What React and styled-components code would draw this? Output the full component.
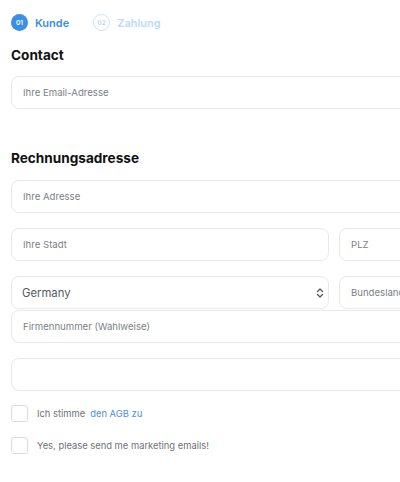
import React from 'react';
import styled, { createGlobalStyle } from 'styled-components';

const GlobalStyle = createGlobalStyle`
  html, body {
    margin: 0;
    padding: 0;
    background: #ffffff;
    overflow: hidden;
  }
  body {
    font-family: Inter, "Noto Sans", sans-serif;
    color: #111;
  }
`;

const Page = styled.div`
  width: 620px;
  padding: 14px 0 0 11px;
  box-sizing: border-box;
`;

const Steps = styled.div`
  display: flex;
  align-items: center;
  gap: 24px;
  height: 17px;
`;

const Step = styled.div`
  display: flex;
  align-items: center;
  gap: 7px;
  color: ${p => (p.$active ? '#3b8fe6' : '#bcdaf8')};
  font-size: 11px;
  font-weight: 600;
`;

const StepNum = styled.span`
  width: 17px;
  height: 17px;
  border-radius: 50%;
  box-sizing: border-box;
  display: flex;
  align-items: center;
  justify-content: center;
  font-size: 6.5px;
  font-weight: 600;
  background: ${p => (p.$active ? '#3b8fe6' : '#fff')};
  color: ${p => (p.$active ? '#fff' : '#bcdaf8')};
  border: ${p => (p.$active ? 'none' : '1.5px solid #cbe2fa')};
`;

const Heading = styled.h2`
  margin: ${p => p.$top}px 0 0;
  font-size: 13.6px;
  font-weight: 700;
  line-height: 18px;
  color: #111;
`;

const Field = styled.div`
  height: 33px;
  box-sizing: border-box;
  border: 1px solid #e6e9ee;
  border-radius: 8px;
  display: flex;
  align-items: center;
  padding-left: 11px;
  font-size: 9.6px;
  color: #7b7f86;
  background: #fff;
  margin-top: ${p => p.$top || 0}px;
  position: relative;
`;

const Row = styled.div`
  display: grid;
  grid-template-columns: 318px 1fr;
  gap: 10px;
  margin-top: ${p => p.$top || 0}px;
`;

const SelectText = styled.span`
  font-size: 11.3px;
  color: #555a61;
  margin-left: -1px;
`;

const Chevron = styled.svg`
  position: absolute;
  right: 4px;
  top: 10px;
`;

const CheckRow = styled.label`
  display: flex;
  align-items: center;
  gap: 9px;
  font-size: 9.4px;
  color: #6e7279;
  margin-top: ${p => p.$top}px;
`;

const Box = styled.span`
  width: 17px;
  height: 17px;
  box-sizing: border-box;
  border: 1px solid #dadde2;
  border-radius: 3px;
  background: #fff;
`;

const Link = styled.span`
  color: #4a90e2;
  margin-left: 5px;
`;

export default function App() {
  return (
    <>
      <GlobalStyle />
      <Page>
        <Steps>
          <Step $active>
            <StepNum $active>01</StepNum>
            Kunde
          </Step>
          <Step>
            <StepNum>02</StepNum>
            Zahlung
          </Step>
        </Steps>

        <Heading $top={15}>Contact</Heading>
        <Field $top={12}>Ihre Email-Adresse</Field>

        <Heading $top={40}>Rechnungsadresse</Heading>
        <Field $top={13}>Ihre Adresse</Field>

        <Row $top={15}>
          <Field>Ihre Stadt</Field>
          <Field>PLZ</Field>
        </Row>
        <Row $top={15}>
          <Field>
            <SelectText>Germany</SelectText>
            <Chevron width="8" height="12" viewBox="0 0 8 12" fill="none" stroke="#555" strokeWidth="1.3" strokeLinecap="round" strokeLinejoin="round">
              <path d="M1.5 4.5 L4 2 L6.5 4.5" />
              <path d="M1.5 7.5 L4 10 L6.5 7.5" />
            </Chevron>
          </Field>
          <Field>Bundesland</Field>
        </Row>
        <Field $top={1}>Firmennummer (Wahlweise)</Field>
        <Field $top={15} />

        <CheckRow $top={14}>
          <Box />
          <span>
            Ich stimme<Link>den AGB zu</Link>
          </span>
        </CheckRow>
        <CheckRow $top={15}>
          <Box />
          <span>Yes, please send me marketing emails!</span>
        </CheckRow>
      </Page>
    </>
  );
}
